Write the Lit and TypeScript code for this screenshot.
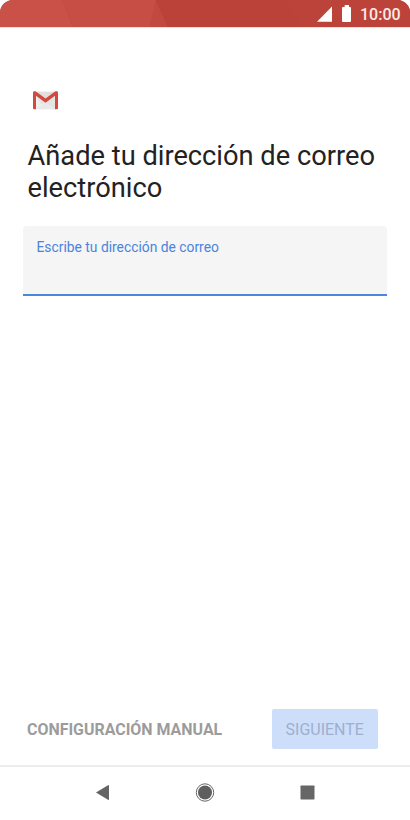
import { LitElement, html, css } from "lit";
import { customElement } from "lit/decorators.js";

@customElement("app-root")
export class AppRoot extends LitElement {
  static styles = css`
    :host {
      display: flex;
      flex-direction: column;
      width: 410px;
      height: 820px;
      overflow: hidden;
      background: #fff;
      font-family: Roboto, "Liberation Sans", sans-serif;
    }
    * { box-sizing: border-box; }
    svg { display: block; flex: none; }
    .status {
      position: relative;
      flex: none;
      height: 27px;
      display: flex;
      justify-content: flex-end;
      align-items: center;
      padding-right: 9px;
      border-radius: 13px 13px 0 0;
      overflow: hidden;
      background: #bc4339;
      color: #fff;
    }
    .facets { position: absolute; left: 0; top: 0; }
    .indicators { position: relative; }
    .clock {
      position: relative;
      width: 41px;
      margin-left: 3px;
      padding-top: 2px;
      font-size: 16px;
      line-height: 20px;
      font-weight: 500;
      white-space: nowrap;
      color: #fbe9e7;
    }
    main {
      flex: 1;
      display: flex;
      flex-direction: column;
      padding: 63px 23px 0;
      border-top: 1px solid #f7dcd9;
    }
    .logo { margin-left: 10px; }
    h1 {
      margin: 30px 0 0 4.5px;
      font-size: 27.25px;
      line-height: 32px;
      font-weight: 400;
      color: #222;
      white-space: nowrap;
    }
    .field {
      height: 70px;
      margin-top: 21.5px;
      padding: 13.5px 13.5px 0;
      background: #f5f5f5;
      border-bottom: 2px solid #4e86dc;
      border-radius: 4px 4px 0 0;
      font-size: 13.83px;
      line-height: 16px;
      color: #4a84dc;
    }
    .actions {
      flex: none;
      display: flex;
      justify-content: space-between;
      align-items: center;
      height: 40px;
      margin-bottom: 16px;
      padding: 0 32px 0 27px;
      font-size: 16px;
      white-space: nowrap;
    }
    button {
      border: 0;
      padding: 0;
      background: none;
      font: inherit;
    }
    .manual { color: #9c9c9c; font-weight: 700; font-size: 15.95px; padding-top: 1px; }
    .next {
      width: 106.5px;
      height: 40px;
      padding-top: 1px;
      border-radius: 2px;
      background: #cddefb;
      color: #9fafcd;
    }
    nav {
      flex: none;
      height: 55px;
      border-top: 2px solid #ececec;
      display: flex;
      justify-content: center;
      align-items: center;
      gap: 78px;
    }
    nav svg { margin-bottom: 1px; }
  `;

  render() {
    return html`
      <header class="status">
        <svg class="facets" width="410" height="27">
          <path d="M0 0H63L73 27H0Z" fill="#c95148" />
          <path d="M63 0H156L150 27H73Z" fill="#c74e44" />
          <path d="M156 0L150 27H168Z" fill="#c2493f" />
          <path d="M156 0L168 27H410V0Z" fill="#ba4238" />
          <path d="M284 0L302 27H410V0Z" fill="#bc4339" />
        </svg>
        <svg class="indicators" width="40" height="27" fill="#fff">
          <path d="M15 6.5V21.7H0Z" />
          <path d="M27.7 5H32V7H33Q34 7 34 8V21Q34 22 33 22H26Q25 22 25 21V8Q25 7 26 7H27.7Z" />
        </svg>
        <span class="clock">10:00</span>
      </header>
      <main>
        <svg class="logo" width="25" height="19" viewBox="0 0 25 19">
          <rect y=".3" width="25" height="18" rx="1.3" fill="#efefef" />
          <path d="M3 4L12.5 12L22 4V18.3H18L7 12Z" fill="#e4e4e4" />
          <path d="M3 18.3L12.5 11L22 18.3Z" fill="#e9e9e9" />
          <path d="M2 1H23L12.5 9Z" fill="#e2dedd" />
          <path d="M1.4 .3H2.5L12.5 7.6L22.5 .3H23.6Q25 .3 25 1.7V17Q25 18.3 23.7 18.3H22V4.8L12.5 11.8L3 4.8V18.3H1.3Q0 18.3 0 17V1.7Q0 .3 1.4 .3Z" fill="#d2493f" />
        </svg>
        <h1>Añade tu dirección de correo<br />electrónico</h1>
        <div class="field">Escribe tu dirección de correo</div>
      </main>
      <div class="actions">
        <button class="manual">CONFIGURACIÓN MANUAL</button>
        <button class="next">SIGUIENTE</button>
      </div>
      <nav>
        <svg width="24" height="24"><path d="M5 11.5L17 4.2Q18 3.8 18 5V18.3Q18 19.3 17 18.8Z" fill="#646464" /></svg>
        <svg width="24" height="24">
          <circle cx="12" cy="11.5" r="8.7" fill="none" stroke="#666" stroke-width="1" />
          <circle cx="12" cy="11.5" r="7" fill="#5e5e5e" />
        </svg>
        <svg width="24" height="24"><rect x="5.5" y="4.5" width="14" height="14" rx=".7" fill="#666" /></svg>
      </nav>
    `;
  }
}
